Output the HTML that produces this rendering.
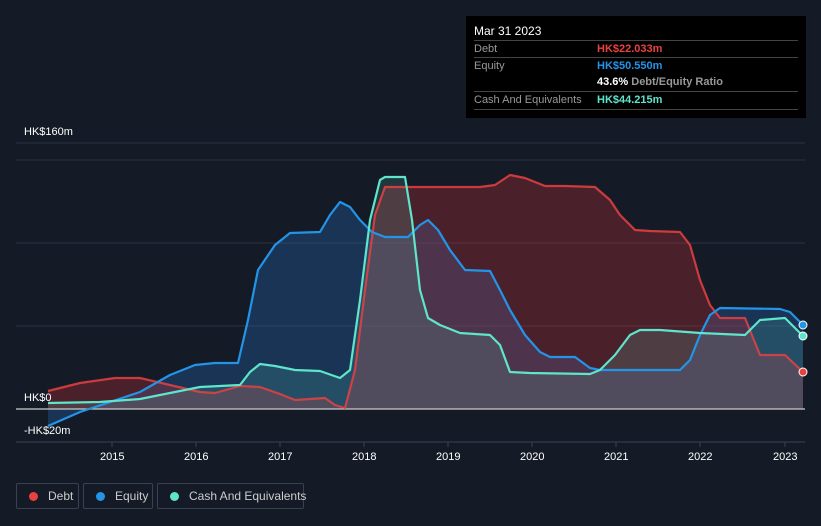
<!DOCTYPE html>
<html><head><style>
body{margin:0;width:821px;height:526px;background:#151b26;font-family:"Liberation Sans",sans-serif;overflow:hidden;position:relative}
.tt{position:absolute;left:466px;top:16px;width:340px;height:102px;background:#000;}
.tt .h{position:absolute;left:8px;top:8px;color:#fff;font-size:12px}
.row{position:absolute;left:8px;width:324px;border-top:1px solid #444;font-size:11px;color:#999;height:17px;line-height:17px;white-space:nowrap}
.row span{position:absolute;left:123px;font-weight:bold}
.lg{position:absolute;top:483px;height:26px;border:1px solid #3a4150;border-radius:2px;color:#ccc;font-size:12px;line-height:24px;box-sizing:border-box;white-space:nowrap}
.lg i{display:inline-block;width:9px;height:9px;border-radius:50%;margin:0 10px 0 12px;vertical-align:-1px}
.ax{position:absolute;color:#fff;font-size:11px}
</style></head><body>
<svg width="821" height="526" style="position:absolute;left:0;top:0">
<g stroke="#2a3140" stroke-width="1">
<line x1="16" y1="143" x2="805" y2="143"/><line x1="16" y1="160" x2="805" y2="160"/><line x1="16" y1="243" x2="805" y2="243"/><line x1="16" y1="326" x2="805" y2="326"/><line x1="16" y1="442" x2="805" y2="442" stroke="#3a4150"/>
</g>
<g stroke="#3a4150"><line x1="112" y1="442" x2="112" y2="447"/><line x1="196" y1="442" x2="196" y2="447"/><line x1="280" y1="442" x2="280" y2="447"/><line x1="364" y1="442" x2="364" y2="447"/><line x1="448" y1="442" x2="448" y2="447"/><line x1="532" y1="442" x2="532" y2="447"/><line x1="616" y1="442" x2="616" y2="447"/><line x1="700" y1="442" x2="700" y2="447"/><line x1="785" y1="442" x2="785" y2="447"/></g>
<path fill="rgba(35,120,210,0.28)" d="M48,426 L80,412 110,402 140,392 170,375 195,365 215,363 238,363 248,320 258,270 275,245 290,233 320,232 330,215 340,202 350,207 360,220 372,232 385,237 408,237 420,225 428,220 438,230 450,250 465,270 490,271 500,290 510,310 525,335 540,352 550,357 575,357 590,368 600,370 680,370 690,360 700,335 710,315 720,308 780,309 790,312 803,325 L803,409 48,409Z"/>
<path fill="rgba(200,50,55,0.3)" d="M48,391 L80,383 115,378 140,378 170,385 200,392 215,393 240,386 260,387 280,394 295,400 310,399 325,398 335,405 345,408 355,370 365,290 375,215 385,187 410,187 480,187 495,185 510,175 525,178 545,186 565,186 595,187 610,200 620,215 635,230 650,231 680,232 690,245 700,280 710,305 720,318 745,318 760,355 785,355 803,372 L803,409 48,409Z"/>
<path fill="rgba(100,220,200,0.15)" d="M48,403 L100,402 140,399 170,393 200,387 240,385 250,372 260,364 275,366 295,370 320,371 340,378 350,370 360,300 370,220 380,180 385,177 405,177 412,220 420,290 428,318 440,325 460,333 490,335 500,345 510,372 530,373 590,374 600,370 615,355 630,335 640,330 660,330 700,333 745,335 760,320 785,318 803,336 L803,409 48,409Z"/>
<line x1="16" y1="409" x2="805" y2="409" stroke="#ccc" stroke-width="1.2"/>
<g fill="none" stroke-width="2.2" stroke-linejoin="round">
<polyline stroke="#e84142" points="48,391 80,383 115,378 140,378 170,385 200,392 215,393 240,386 260,387 280,394 295,400 310,399 325,398 335,405 345,408 355,370 365,290 375,215 385,187 410,187 480,187 495,185 510,175 525,178 545,186 565,186 595,187 610,200 620,215 635,230 650,231 680,232 690,245 700,280 710,305 720,318 745,318 760,355 785,355 803,372" opacity="0.85"/>
<polyline stroke="#2394e8" points="48,426 80,412 110,402 140,392 170,375 195,365 215,363 238,363 248,320 258,270 275,245 290,233 320,232 330,215 340,202 350,207 360,220 372,232 385,237 408,237 420,225 428,220 438,230 450,250 465,270 490,271 500,290 510,310 525,335 540,352 550,357 575,357 590,368 600,370 680,370 690,360 700,335 710,315 720,308 780,309 790,312 803,325"/>
<polyline stroke="#5ee5cc" points="48,403 100,402 140,399 170,393 200,387 240,385 250,372 260,364 275,366 295,370 320,371 340,378 350,370 360,300 370,220 380,180 385,177 405,177 412,220 420,290 428,318 440,325 460,333 490,335 500,345 510,372 530,373 590,374 600,370 615,355 630,335 640,330 660,330 700,333 745,335 760,320 785,318 803,336"/>
</g>
<circle cx="803" cy="372" r="4" fill="#e84142" stroke="#fff" stroke-width="1"/>
<circle cx="803" cy="325" r="4" fill="#2394e8" stroke="#fff" stroke-width="1"/>
<circle cx="803" cy="336" r="4" fill="#5ee5cc" stroke="#fff" stroke-width="1"/>
</svg>
<div class="ax" style="left:24px;top:126px">HK$160m</div>
<div class="ax" style="left:24px;top:392px">HK$0</div>
<div class="ax" style="left:24px;top:425px">-HK$20m</div>
<div class="ax" style="left:100px;top:451px">2015</div><div class="ax" style="left:184px;top:451px">2016</div><div class="ax" style="left:268px;top:451px">2017</div><div class="ax" style="left:352px;top:451px">2018</div><div class="ax" style="left:436px;top:451px">2019</div><div class="ax" style="left:520px;top:451px">2020</div><div class="ax" style="left:604px;top:451px">2021</div><div class="ax" style="left:688px;top:451px">2022</div><div class="ax" style="left:773px;top:451px">2023</div>
<div class="tt"><div class="h">Mar 31 2023</div>
<div class="row" style="top:24px">Debt<span style="color:#e84142">HK$22.033m</span></div>
<div class="row" style="top:41px">Equity<span style="color:#2394e8">HK$50.550m</span></div>
<div class="row" style="top:58px;border-top:none"><span style="color:#fff">43.6% <b style="color:#999">Debt/Equity Ratio</b></span></div>
<div class="row" style="top:75px">Cash And Equivalents<span style="color:#5ee5cc">HK$44.215m</span></div>
<div class="row" style="top:93px;height:0"></div>
</div>
<div class="lg" style="left:16px;width:63px"><i style="background:#e84142"></i>Debt</div>
<div class="lg" style="left:83px;width:70px"><i style="background:#2394e8"></i>Equity</div>
<div class="lg" style="left:157px;width:147px"><i style="background:#5ee5cc"></i>Cash And Equivalents</div>
</body></html>
